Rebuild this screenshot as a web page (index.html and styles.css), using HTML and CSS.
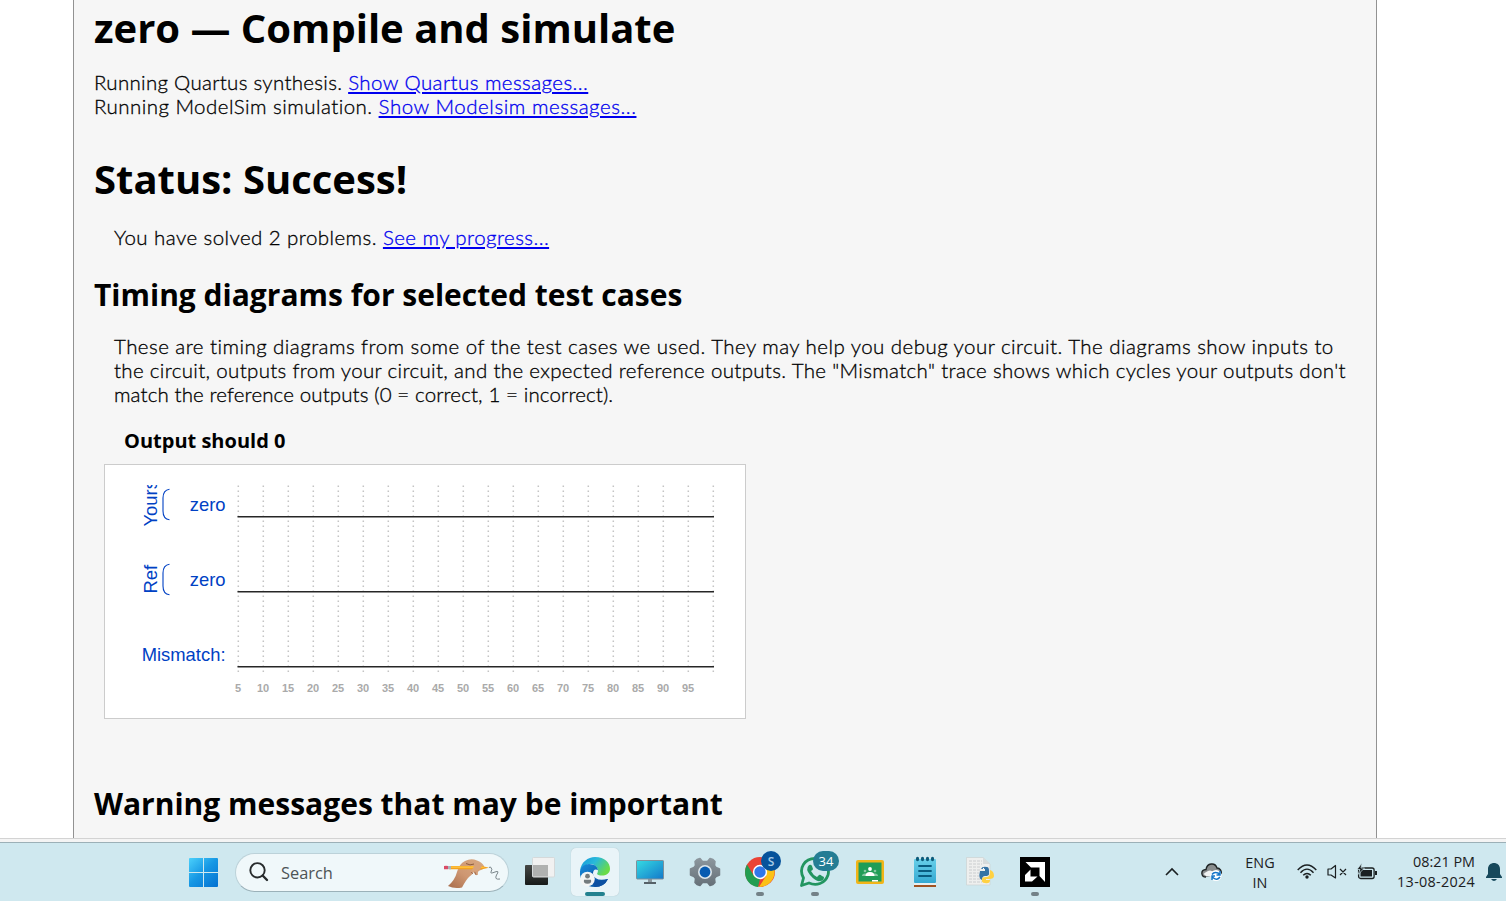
FILE: index.html
```html
<!DOCTYPE html>
<html lang="en">
<head>
<meta charset="utf-8">
<title>zero — Compile and simulate</title>
<link rel="stylesheet" href="styles.css">
</head>
<body>
<main class="viewport">
  <article class="content">
    <h1 class="title">zero — Compile and simulate</h1>
    <p class="log"><span class="l1">Running Quartus synthesis. <a href="#">Show Quartus messages...</a></span><br><span class="l2">Running ModelSim simulation. <a href="#">Show Modelsim messages...</a></span></p>
    <h1 class="title">Status: Success!</h1>
    <p class="solved"><span class="l3">You have solved 2 problems. <a href="#">See my progress...</a></span></p>
    <h2 class="section">Timing diagrams for selected test cases</h2>
    <p class="intro"><span class="l4">These are timing diagrams from some of the test cases we used. They may help you debug your circuit. The diagrams show inputs to</span><br><span class="l5">the circuit, outputs from your circuit, and the expected reference outputs. The "Mismatch" trace shows which cycles your outputs don't</span><br><span class="l6">match the reference outputs (0 = correct, 1 = incorrect).</span></p>
    <h3 class="case">Output should 0</h3>
    <div class="wave">
      <svg id="wave" width="640" height="253" viewBox="105 465 640 253">
        <defs><clipPath id="area"><rect x="125" y="485" width="600" height="213"/></clipPath></defs>
        <g id="grid" class="grid"></g>
        <g class="signals" clip-path="url(#area)">
          <text transform="translate(156.500 526.500) rotate(-90)">Yours</text>
          <text transform="translate(156.500 593.500) rotate(-90)">Ref</text>
          <text x="225.500" y="511" text-anchor="end">zero</text>
          <text x="225.500" y="586" text-anchor="end">zero</text>
          <text x="225.500" y="661" text-anchor="end">Mismatch:</text>
        </g>
        <g class="brace">
          <path d="M169.500 489.200Q163 490 163 498V511Q163 519 169.500 519.800"/>
          <path d="M169.500 564.200Q163 565 163 573V586Q163 594 169.500 594.800"/>
        </g>
        <g id="traces" class="traces"></g>
        <g id="ticks" class="ticks"></g>
      </svg>
    </div>
    <h2 class="section">Warning messages that may be important</h2>
  </article>
</main>
<div class="edge"></div>
<footer class="taskbar">
  <svg class="start" width="29" height="29" viewBox="0 0 29 29">
    <defs>
      <linearGradient id="win" gradientUnits="userSpaceOnUse" x1="0" y1="0" x2="27" y2="29"><stop offset="0" stop-color="#4bd0fb"/><stop offset=".5" stop-color="#1697e4"/><stop offset="1" stop-color="#0473d2"/></linearGradient>
    </defs>
    <path fill="url(#win)" d="M1 0H14V14H0V1Q0 0 1 0ZM15 0H28Q29 0 29 1V14H15ZM0 15H14V29H1Q0 29 0 28ZM15 15H29V28Q29 29 28 29H15Z"/>
  </svg>
  <div class="search">
    <svg class="lens" width="20" height="20" viewBox="0 0 20 20"><circle cx="8.500" cy="8.300" r="7.200" fill="none" stroke="#272b2c" stroke-width="1.900"/><path d="M13.600 13.500L18 18" stroke="#272b2c" stroke-width="2.400" stroke-linecap="round"/></svg>
    <span class="hint">Search</span>
    <svg class="hand" width="58" height="30" viewBox="0 0 58 30">
      <defs><linearGradient id="skin" x1="0" y1="1" x2="1" y2="0"><stop offset="0" stop-color="#a76c4b"/><stop offset=".45" stop-color="#ce9772"/><stop offset="1" stop-color="#d8aa83"/></linearGradient></defs>
      <path fill="url(#skin)" d="M4 27Q11 21 13 13Q15 5 21 2Q27-1 33 1.500Q38 3 40 7Q40 10 37 11Q33 12 34 15.500Q32 18 29.500 13Q29 15 25 18Q22 21 18 28.500Q10 30 4 27Z"/>
      <path d="M30 11l2 5M27 13l2 2" stroke="#986346" stroke-width=".8" fill="none"/>
      <path fill="#f4a21f" d="M5 7H38L45 8.700L38 10.200H5Z"/><path fill="#ffc947" d="M5 7.500H38L41 8.700H5Z"/>
      <path fill="#d94c67" d="M0 7Q2 6.700 4 7V10.200Q2 10.500 0 10.200Z"/><path fill="#aab5bb" d="M4 7h3v3.200H4z"/>
      <path fill="#d7a37b" d="M32 5Q37 4 38 7Q37 10 34 11Q31 14 27 12.500Q29 8 32 5Z"/>
      <path d="M22 4.500Q26 7 30 5" fill="none" stroke="#8c5b3d"/>
      <path d="M45 8.500L46.500 8Q49 10 47 13Q46 15 51 13Q56 11 52.500 16Q50 21 56 20" fill="none" stroke="#6c787d" stroke-width=".9"/>
    </svg>
  </div>
  <nav class="apps">
    <span class="app"><svg width="32" height="32" viewBox="0 0 32 32">
      <defs><linearGradient id="tvd" x1="0" y1="0" x2="0" y2="1"><stop offset="0" stop-color="#454745"/><stop offset="1" stop-color="#171a19"/></linearGradient></defs>
      <rect x="1" y="9" width="23" height="20" rx="1" fill="url(#tvd)"/><rect x="8.500" y="1.500" width="22" height="19.500" rx="1" fill="#f1f1f1" stroke="#d5d9da"/><path fill="#b0b1b0" d="M9 9H24V20.500H9Z"/>
    </svg></span>
    <span class="app current"><svg width="32" height="32" viewBox="0 0 32 32">
      <defs>
        <linearGradient id="ea" x1="0" y1="0" x2="1" y2=".5"><stop offset="0" stop-color="#1295db"/><stop offset=".5" stop-color="#29b9da"/><stop offset="1" stop-color="#69db48"/></linearGradient>
        <linearGradient id="eb" x1="0" y1="0" x2="1" y2="1"><stop offset="0" stop-color="#168bdb"/><stop offset="1" stop-color="#084896"/></linearGradient>
      </defs>
      <path fill="url(#ea)" d="M1 15C2 6 9 1 16 1C26 1 31 7 31 13C31 20 21 21 18 18C20 15 19 10 13 8Q6 7 1 15Z"/>
      <path fill="url(#eb)" d="M1 15Q3 8 10 8Q18 8 19 14Q14 12 14 18Q16 26 29 23Q25 31 16 31C7 31 0 25 1 15Z"/>
      <path fill="#0d50a2" d="M14 15Q12 21 17 24Q22 26 29 23Q25 31 16 31Q12 26 12 20Q12 16 14 15Z"/>
      <circle cx="8.500" cy="23" r="7.300" fill="#f3f5f5"/><circle cx="8.500" cy="20.200" r="2.400" fill="#737b7e"/><path fill="#737b7e" d="M5 23.700H12Q13 27.700 8.500 27.700Q4 27.700 5 23.700Z"/>
    </svg><i class="running wide"></i></span>
    <span class="app"><svg width="32" height="32" viewBox="0 0 32 32">
      <defs><linearGradient id="mon" x1="0" y1="0" x2="1" y2="1"><stop offset="0" stop-color="#35dbe3"/><stop offset="1" stop-color="#1378ca"/></linearGradient></defs>
      <path fill="#8d999f" d="M14 23h4v5h-4z"/><path fill="#566168" d="M10 26h12v2H10z"/><rect x="2.500" y="4.500" width="27" height="18.500" rx=".7" fill="url(#mon)" stroke="#7e8f9a"/>
    </svg></span>
    <span class="app"><svg width="32" height="32" viewBox="0 0 32 32">
      <defs><linearGradient id="gear" x1="0" y1="0" x2="0" y2="1"><stop offset="0" stop-color="#8c969d"/><stop offset="1" stop-color="#667078"/></linearGradient></defs>
      <path fill="url(#gear)" stroke="url(#gear)" stroke-width="1.500" stroke-linejoin="round" d="M8 3.500L11 2.500L13.500 5.500H18.500L21 2.500L24 3.500L26 5.500L25.500 9.500L27 11.500L30.500 13V19L27 20.500L25.500 22.500L26 26.500L24 28.500L21 29.500L18.500 26.500H13.500L11 29.500L8 28.500L6 26.500L6.500 22.500L5 20.500L1.500 19V13L5 11.500L6.500 9.500L6 5.500Z"/>
      <circle cx="16" cy="16" r="7" fill="#dce6ec"/><circle cx="16" cy="16" r="5.400" fill="#075bb1"/>
    </svg></span>
    <span class="app"><svg width="32" height="32" viewBox="0 0 32 32">
      <circle cx="16" cy="16" r="15" fill="#ea4335"/><path fill="#229d51" d="M3 8.500L10 20L16 23L14 31C3 30-2 18 3 8.500Z"/><path fill="#fbc116" d="M16 9H29C34 19 27 31 15 31L22 20Z"/>
      <circle cx="16" cy="16" r="7.200" fill="#fff"/><circle cx="16" cy="16" r="5.700" fill="#3177e9"/>
    </svg><b class="badge profile">S</b><i class="running"></i></span>
    <span class="app"><svg width="32" height="32" viewBox="0 0 32 32">
      <path fill="none" stroke="#229560" stroke-width="2.800" stroke-linejoin="round" d="M2.500 29.500L4.500 22C-1 12 6 2.500 16 2.500C26 2.500 31 12 29 19C26 28 17 30 10 27Z"/>
      <path fill="#229560" d="M10 9Q12 8 13 10L14 13Q14 14 12 15Q14 19 18 21L20 19Q21 18 23 20L25 21Q25 25 21 25Q17 26 11 19Q6 13 10 9Z"/>
    </svg><b class="badge count">34</b><i class="running"></i></span>
    <span class="app"><svg width="32" height="32" viewBox="0 0 32 32">
      <rect x="2" y="4" width="28" height="24" rx="2" fill="#f1b519"/><path fill="#209d57" d="M4.500 6.500H27.500V25.500H4.500Z"/><g fill="#84c8a2"><circle cx="11" cy="15" r="1.300"/><circle cx="21" cy="15" r="1.300"/><path d="M8 20Q8 17 12 17.500V20ZM24 20Q24 17 20 17.500V20Z"/></g><circle cx="16" cy="13" r="1.900" fill="#fff"/><path fill="#fff" d="M11.500 20Q11.500 16 16 16T20.500 20ZM18 24H24V25.500H18Z"/>
    </svg></span>
    <span class="app"><svg width="32" height="32" viewBox="0 0 32 32">
      <defs><linearGradient id="note" x1="0" y1="0" x2="0" y2="1"><stop offset="0" stop-color="#67cfe9"/><stop offset="1" stop-color="#35a9d2"/></linearGradient></defs>
      <path fill="#a15322" d="M5 27H27V31H5Z"/><path fill="#e9f0f1" d="M5 25H27V29H5Z"/><rect x="5" y="3" width="22" height="24" rx="1" fill="url(#note)"/><path stroke="#095c80" stroke-width="1.800" stroke-linecap="round" d="M10 10H22M10 15H22M10 20H22"/><g fill="#0d5a79"><ellipse cx="8.500" cy="3" rx="1.600" ry="2.200"/><ellipse cx="13.500" cy="3" rx="1.600" ry="2.200"/><ellipse cx="18.500" cy="3" rx="1.600" ry="2.200"/><ellipse cx="23.500" cy="3" rx="1.600" ry="2.200"/></g>
    </svg></span>
    <span class="app"><svg width="32" height="32" viewBox="0 0 32 32">
      <path fill="#eeefee" stroke="#cbd2d3" stroke-width=".7" d="M2.500 1.500H19L26 8V29H2.500Z"/><path fill="#d7dbdc" d="M19 1.500V8H26Z"/><path stroke="#c0c5c6" stroke-width=".8" stroke-dasharray="3 1" d="M5 5h13M5 8h13M5 11h12M5 14h12M5 17h10M5 20h10M5 23h12M5 26h13"/>
      <path fill="#3573a5" d="M16 15H21V13H17Q18 10 23 11Q25 11 25 15V18Q25 20 21 20Q18 20 18 24Q14 23 16 15Z"/><path fill="#ffd142" d="M26 14Q30 15 30 20Q30 23 25 23H22V24H26Q26 28 21 27Q17 27 18 23Q18 21 22 21Q26 21 26 17Z"/><circle cx="19.500" cy="12.500" r=".7" fill="#fff"/>
    </svg></span>
    <span class="app"><svg width="32" height="32" viewBox="0 0 32 32">
      <path fill="#000" d="M1 1H31V31H1Z"/><path fill="#fff" d="M6.500 6H26V26L20.500 20V11.500H12ZM11.500 13.500V20.500H18.500L13 25.500H6V19Z"/>
    </svg><i class="running"></i></span>
  </nav>
  <div class="tray">
    <svg class="chevron" width="14" height="10" viewBox="0 0 14 10"><path fill="none" stroke="#1b2022" stroke-width="1.600" d="M1 8L7 2L13 8"/></svg>
    <svg class="cloud" width="22" height="20" viewBox="0 0 22 20"><path fill="#898d8e" stroke="#202526" stroke-width="1.400" d="M5 15C0 15-1 8 5 7.500C6 1 14 0 16 6C19 6 21 9 20 12"/><path fill="#f0f2f2" d="M2.500 12Q9 6 12 10L10 14H5Z"/><circle cx="15" cy="13.500" r="5.600" fill="#fff"/><path fill="none" stroke="#1575c9" stroke-width="1.500" d="M11 12.500Q13 9.500 17 11L18.500 12.500M19 9V13H15.500M19 15Q16 19 12.500 16L11 14.500M11 18V14H14"/></svg>
    <div class="lang"><span>ENG</span><span>IN</span></div>
    <svg class="wifi" width="20" height="16" viewBox="0 0 20 16"><g fill="none" stroke="#1b2022" stroke-width="1.400"><path d="M.7 6Q10-4 19.300 6M3.500 8.700Q10 1.600 16.500 8.700M6.200 11.300Q10 7.500 13.800 11.300"/></g><circle cx="10" cy="13" r="1.700" fill="#1b2022"/></svg>
    <svg class="sound" width="20" height="16" viewBox="0 0 20 16"><path fill="none" stroke="#1b2022" stroke-width="1.200" stroke-linejoin="round" d="M1 5H4L8.500 1.500V14L4 11H1ZM13 5L19 11M19 5L13 11"/></svg>
    <svg class="battery" width="20" height="18" viewBox="0 0 20 18"><rect x="1.600" y="5" width="15.500" height="10.500" rx="2" fill="none" stroke="#1b2022" stroke-width="1.300"/><path fill="#1b2022" d="M3.500 7H15V13.500H3.500ZM18 8H20V12H18Z"/><path fill="#1b2022" stroke="#cfe8ef" stroke-width=".7" d="M5 0L0 6.500H3L1 11.500L7.500 5H4Z"/></svg>
    <div class="clock"><span class="time">08:21 PM</span><span class="date">13-08-2024</span></div>
    <svg class="bell" width="18" height="20" viewBox="0 0 18 20"><path fill="#17495c" d="M1 15L3 12V7C3-1 15-1 15 7V12L17 15V16H1ZM6 17H12Q9 21 6 17Z"/></svg>
  </div>
</footer>
<script src="wave.js"></script>
</body>
</html>
```
FILE: styles.css
```css
* { box-sizing: border-box; }
body { margin: 0; width: 1506px; height: 901px; overflow: hidden; background: #fff; }
.viewport { height: 838px; overflow: hidden; }
.content {
  width: 1304px; height: 838px; margin-left: 73px; padding: 1px 20px 0;
  background: #f6f6f6; border: solid #929292; border-width: 0 1px;
  font: 300 20.5px/24px Lato, sans-serif; color: #000;
}
.content p { margin: 0; white-space: nowrap; -webkit-text-stroke: .3px; }
.content a { color: #0000ee; text-underline-offset: 2px; text-decoration-thickness: 2px; }
.l1 { letter-spacing: .3px; }
.l1 a { letter-spacing: .43px; }
.l2 { letter-spacing: .46px; }
.l2 a { letter-spacing: .54px; }
.l3 { letter-spacing: .43px; }
.l4 { letter-spacing: .45px; }
.l5 { letter-spacing: .33px; }
.l6 { letter-spacing: .12px; }
.title, .section, .case { margin: 0; font-family: "Open Sans", sans-serif; font-weight: 700; }
.title { font-size: 40px; line-height: 54px; }
.section { font-size: 30px; line-height: 41px; }
.case { margin: 21px 0 0 30px; font-size: 20px; line-height: 27px; }
.content .log { margin: 15px 0 34px; }
.content .solved { margin: 19px 20px 25px; }
.content .intro { margin: 19px 20px 0; }
.wave { width: 642px; height: 255px; margin: 10px 0 64px 10px; background: #fff; border: 1px solid #ccc; }
.wave svg { display: block; }
.signals text { font: 18.400px "Liberation Sans", Arial, sans-serif; fill: #0041c4; }
.brace { fill: none; stroke: #0041c4; stroke-width: 1.1; }
.grid line { stroke: #c4c4c4; stroke-width: 1.5; stroke-dasharray: 1.5 3.5; }
.traces { stroke: #262626; stroke-width: 1.6; }
.ticks text { font: 700 11px "Liberation Sans", Arial, sans-serif; fill: #aaa; text-anchor: middle; }

.edge { height: 4px; background: #f4f4f4; border-top: 1px solid #d3d3d3; }
.taskbar {
  display: flex; align-items: center; height: 59px; padding-left: 189px;
  background: #cfe8ef; border-top: 1px solid #9cb0b7; color: #1b2022;
  font-family: "Open Sans", sans-serif;
}
.taskbar svg { display: block; flex: none; }
.search {
  display: flex; align-items: center; width: 274px; height: 39px; margin-left: 17px; padding-left: 13px;
  background: #f0f8fa; border: 1px solid #bcd2d9; border-bottom-color: #9bb1b9; border-radius: 20px;
}
.hint { width: 56px; margin: 1px 0 0 12px; font-size: 16.400px; line-height: 22px; color: #4d5456; }
.hand { margin: 4px 0 0 107px; }
.apps { display: flex; gap: 7px; margin-left: 7px; }
.app { position: relative; display: flex; align-items: center; justify-content: center; width: 48px; height: 48px; }
.current { background: #e9f4f8; border-radius: 5px; box-shadow: 0 0 1px #a5b7bd; }
.running { position: absolute; bottom: 0; left: 20px; width: 8px; height: 4px; border-radius: 2px; background: #738187; }
.running.wide { left: 14px; width: 20px; background: #23818f; }
.badge { position: absolute; display: flex; align-items: center; justify-content: center; height: 20px; border-radius: 10px; font-weight: 400; }
.profile { top: 3px; left: 25px; width: 20px; background: #07539b; color: #a9cbe7; font-size: 12px; font-weight: 600; }
.count { top: 3px; left: 22px; width: 26px; background: #257d94; color: #fff; font-size: 13px; }
.tray { display: flex; align-items: center; margin-left: 106px; }
.cloud { margin-left: 22px; }
.lang { display: flex; flex-direction: column; align-items: center; width: 32px; margin: 1px 0 0 21px; font-size: 14.400px; line-height: 20px; }
.wifi { margin-left: 21px; }
.sound { margin-left: 10px; }
.battery { margin: 0 0 1px 10px; }
.clock { display: flex; flex-direction: column; align-items: flex-end; width: 84px; margin-left: 14px; font-size: 14.400px; line-height: 20px; white-space: nowrap; }
.date { letter-spacing: .28px; }
.bell { margin-left: 10px; }
```
FILE: wave.js
```js
const ns = "http://www.w3.org/2000/svg";
function add(parent, tag, attrs, text) {
  const el = document.createElementNS(ns, tag);
  for (const key in attrs) el.setAttribute(key, attrs[key]);
  if (text) el.textContent = text;
  document.getElementById(parent).appendChild(el);
}
for (let i = 0; i < 20; i++) {
  const x = 238.3 + i * 25;
  add("grid", "line", { x1: x, x2: x, y1: 485.5, y2: 672 });
  if (i < 19) add("ticks", "text", { x: x - 0.3, y: 692 }, String((i + 1) * 5));
}
for (const y of [516.8, 591.8, 666.8]) {
  add("traces", "line", { x1: 237.5, x2: 714, y1: y, y2: y });
}
```
